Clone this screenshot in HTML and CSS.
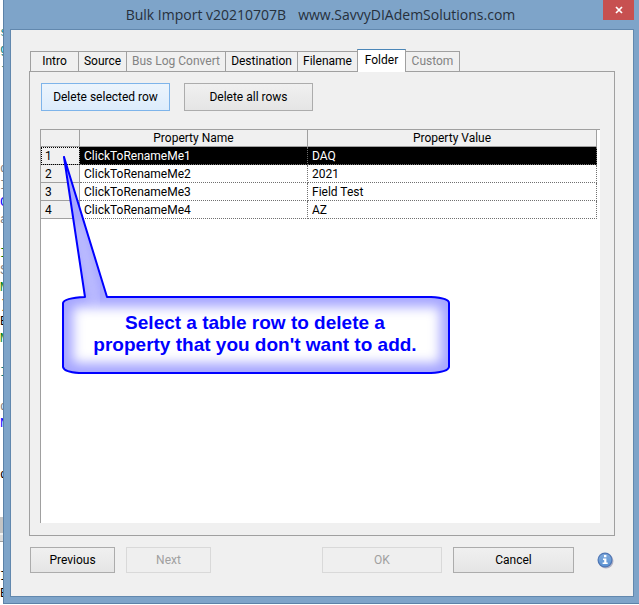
FILE: index.html
```html
<!DOCTYPE html>
<html lang="en">

<head>
    <meta charset="utf-8">
    <title>Bulk Import</title>
    <link rel="stylesheet" href="styles.css">
</head>

<body>

    <!-- the edge of the script editor behind the dialog -->
    <div class="editor" aria-hidden="true">
        <div></div>
        <div></div>
        <div class="teal">s</div>
        <div class="teal">g</div>
        <div class="teal">-</div>
        <div></div>
        <div></div>
        <div></div>
        <div></div>
        <div></div>
        <div class="gray">d</div>
        <div class="gray">I</div>
        <div class="blue">C</div>
        <div class="gray">a</div>
        <div></div>
        <div class="green">I</div>
        <div class="gray">S</div>
        <div class="green">M</div>
        <div class="brown">)</div>
        <div>E</div>
        <div class="green">M</div>
        <div></div>
        <div class="teal">I</div>
        <div></div>
        <div class="gray">d</div>
        <div class="blue">N</div>
        <div></div>
        <div></div>
        <div>d</div>
        <div></div>
        <div></div>
        <div class="scroll"></div>
        <div class="scroll-end"></div>
        <div></div>
        <div>I</div>
        <div>E</div>
    </div>

    <div class="window">
        <div class="title-bar">
            <h1 class="title"><span>Bulk Import v20210707B</span><span>www.SavvyDIAdemSolutions.com</span></h1>
            <button class="close-btn" aria-label="Close">
                <svg width="8" height="8" viewBox="0 0 8 8">
                    <path d="M1 1 L7 7 M7 1 L1 7" stroke="#fff" stroke-width="1.7" />
                </svg>
            </button>
        </div>

        <div class="dialog">
            <div class="tabs" role="tablist">
                <button class="tab small" role="tab">Intro</button>
                <button class="tab small" role="tab">Source</button>
                <button class="tab large" role="tab" disabled>Bus Log Convert</button>
                <button class="tab wide" role="tab">Destination</button>
                <button class="tab medium" role="tab">Filename</button>
                <button class="tab small active" role="tab" aria-selected="true">Folder</button>
                <button class="tab custom" role="tab" disabled>Custom</button>
            </div>

            <div class="panel" role="tabpanel">
                <div class="panel-buttons">
                    <button class="btn focused">Delete selected row</button>
                    <button class="btn">Delete all rows</button>
                </div>

                <div class="grid-box">
                    <table class="grid">
                        <thead>
                            <tr>
                                <th class="num-col"></th>
                                <th class="name-col">Property Name</th>
                                <th>Property Value</th>
                            </tr>
                        </thead>
                        <tbody>
                            <tr class="selected">
                                <th>1</th>
                                <td>ClickToRenameMe1</td>
                                <td>DAQ</td>
                            </tr>
                            <tr>
                                <th>2</th>
                                <td>ClickToRenameMe2</td>
                                <td>2021</td>
                            </tr>
                            <tr>
                                <th>3</th>
                                <td>ClickToRenameMe3</td>
                                <td>Field Test</td>
                            </tr>
                            <tr>
                                <th>4</th>
                                <td>ClickToRenameMe4</td>
                                <td>AZ</td>
                            </tr>
                        </tbody>
                    </table>

                    <div class="callout">
                        <svg class="callout-shape" width="390" height="222" viewBox="0 0 390 222">
                            <defs>
                                <clipPath id="callout-clip">
                                    <path id="callout-path" d="M2 3 L23 143 Q2 144 1 149 V213 Q2 218 17 219 H369 Q386 218 387 213 V149 Q387 144 369 143 H45 Z" />
                                </clipPath>
                                <filter id="soft" x="-20%" y="-40%" width="140%" height="180%" color-interpolation-filters="sRGB">
                                    <feGaussianBlur stdDeviation="6" />
                                </filter>
                            </defs>
                            <g clip-path="url(#callout-clip)">
                                <rect width="390" height="222" fill="#a6a6ff" />
                                <path d="M16 70 L34 150" stroke="#d4d4ff" stroke-width="6" filter="url(#soft)" />
                                <rect x="11" y="153" width="367" height="56" rx="4" fill="#fff" filter="url(#soft)" />
                            </g>
                            <use href="#callout-path" fill="none" stroke="#0000ff" stroke-width="2" stroke-linejoin="round" />
                        </svg>
                        <p class="callout-text">Select a table row to delete a property that you don't want to add.</p>
                    </div>
                </div>
            </div>

            <div class="footer">
                <button class="btn nav">Previous</button>
                <button class="btn nav" disabled>Next</button>
                <button class="btn ok" disabled>OK</button>
                <button class="btn cancel">Cancel</button>
                <button class="info-btn" aria-label="Info">
                    <svg width="17" height="17" viewBox="0 0 17 17">
                        <defs>
                            <linearGradient id="info-fill" x1="0" y1="0" x2="0" y2="1">
                                <stop offset="0" stop-color="#7fa9dc" />
                                <stop offset="1" stop-color="#5c93d3" />
                            </linearGradient>
                        </defs>
                        <circle cx="9" cy="9" r="7.5" fill="#b3b3c4" />
                        <circle cx="8" cy="8" r="7.5" fill="#4f76b4" />
                        <circle cx="8" cy="8" r="6.3" fill="url(#info-fill)" />
                        <path d="M7 3h2.4v2.2H7z M6 6.5h3.4v4h1.3V12H5.6v-1.5h1.6V8H6z" fill="#fff" />
                    </svg>
                </button>
            </div>
        </div>
    </div>

</body>

</html>
```

FILE: styles.css
```css
* {
    box-sizing: border-box;
}

body {
    display: flex;
    height: 100vh;
    margin: 0;
    overflow: hidden;
    background-color: #fff;
    font-family: Roboto, "Open Sans", sans-serif;
    font-size: 12px;
    color: #000;
}

button {
    font: inherit;
    color: inherit;
    padding: 0;
}

.editor {
    flex: 0 0 3px;
    margin-top: -10px;
    overflow: hidden;
    font-family: "Liberation Mono", monospace;
    font-size: 13px;
}

.editor div {
    height: 17px;
    line-height: 17px;
}

.teal {
    color: #008080;
}

.gray {
    color: #808080;
}

.blue {
    color: #0000ff;
}

.green {
    color: #008000;
}

.brown {
    color: #a04000;
}

.editor .scroll {
    height: 18px;
    background-color: #c4c4c4;
    border-bottom: 2px solid #f0f0f0;
}

.editor .scroll-end {
    height: 16px;
    background: linear-gradient(#dcdcdc 6px, #a0a0a0 6px, #a0a0a0 7px, #fff 7px);
}

.window {
    display: flex;
    flex: 1;
    flex-direction: column;
    margin-bottom: 1px;
    padding: 0 5px 6px 6px;
    background-color: #7ea4c9;
    border-left: 1px solid #5c82a8;
    border-bottom: 1px solid #5c82a8;
}

.title-bar {
    display: flex;
    height: 29px;
}

.title {
    display: flex;
    flex: 1;
    justify-content: center;
    gap: 12px;
    margin: 0;
    padding-left: 28px;
    font-family: "Open Sans", sans-serif;
    font-size: 14px;
    font-weight: normal;
    line-height: 29px;
    color: #26303c;
}

.close-btn {
    display: flex;
    align-items: center;
    justify-content: center;
    width: 31px;
    height: 20px;
    border: none;
    background-color: #c75050;
}

.dialog {
    display: flex;
    flex: 1;
    flex-direction: column;
    padding: 19px 18px 23px 18px;
    background-color: #f0f0f0;
    border: 1px solid #6288ae;
}

.tabs {
    display: flex;
    align-items: flex-end;
    padding-left: 1px;
}

.tab {
    height: 20px;
    margin-right: -1px;
    border: 1px solid #a0a0a0;
    border-bottom: none;
    background-color: #f0f0f0;
    line-height: 19px;
    white-space: nowrap;
}

.tab:disabled {
    color: #838383;
}

.tab.small {
    width: 49px;
}

.tab.medium {
    width: 61px;
}

.tab.custom {
    width: 55px;
}

.tab.wide {
    width: 73px;
}

.tab.large {
    width: 100px;
}

.tab.active {
    z-index: 1;
    height: 23px;
    margin-bottom: -1px;
    padding-bottom: 2px;
    border-top-color: #4a86b8;
    background-color: #fff;
}

.panel {
    display: flex;
    flex: 1;
    flex-direction: column;
    gap: 18px;
    padding: 11px 14px 12px 10px;
    border: 1px solid #a0a0a0;
}

.panel-buttons {
    display: flex;
    gap: 14px;
    padding-left: 1px;
}

.panel-buttons .btn {
    width: 129px;
    height: 28px;
}

.btn {
    height: 26px;
    border: 1px solid #acacac;
    background: linear-gradient(#f0f0f0, #e5e5e5);
}

.btn.focused {
    border-color: #7eb4ea;
    background: linear-gradient(#ecf4fc, #dcecfc);
}

.btn:disabled {
    border-color: #d9d9d9;
    background: #efefef;
    color: #a0a0a0;
}

.grid-box {
    position: relative;
    flex: 1;
    padding-right: 3px;
    background-color: #fff;
    border-top: 1px solid #a0a0a0;
    border-left: 1px solid #a0a0a0;
}

.grid {
    width: 100%;
    table-layout: fixed;
    border-collapse: separate;
    border-spacing: 0;
}

.grid th,
.grid td {
    height: 18px;
    padding: 0 4px;
    border-right: 1px dotted #707070;
    border-bottom: 1px dotted #707070;
    font-weight: normal;
    line-height: 16px;
    text-align: left;
}

.grid th {
    border-style: solid;
    border-width: 0 1px 1px 0;
    border-color: #a0a0a0;
    background-color: #f0f0f0;
}

.grid thead th {
    height: 17px;
    text-align: center;
}

.grid .num-col {
    width: 39px;
}

.grid .name-col {
    width: 228px;
}

.grid .selected td {
    background-color: #000;
    color: #fff;
}

.grid .selected th {
    outline: 1px dotted #000;
    outline-offset: -1px;
}

/* help balloon that points at the row header */
.callout {
    position: absolute;
    top: 24px;
    left: 21px;
    width: 390px;
    padding-top: 158px;
}

.callout-shape {
    position: absolute;
    top: 0;
    left: 0;
}

.callout-text {
    position: relative;
    margin: 0;
    padding: 0 30px 0 26px;
    font-family: "Liberation Sans", Arial, sans-serif;
    font-size: 19px;
    font-weight: bold;
    line-height: 22px;
    text-align: center;
    color: #0000ff;
}

.footer {
    display: flex;
    align-items: center;
    gap: 11px;
    padding: 11px 1px 0;
}

.btn.nav {
    width: 85px;
}

.btn.ok {
    width: 120px;
    margin-left: auto;
}

.btn.cancel {
    width: 121px;
}

.info-btn {
    display: flex;
    margin-left: 12px;
    border: none;
    background: none;
}
```
